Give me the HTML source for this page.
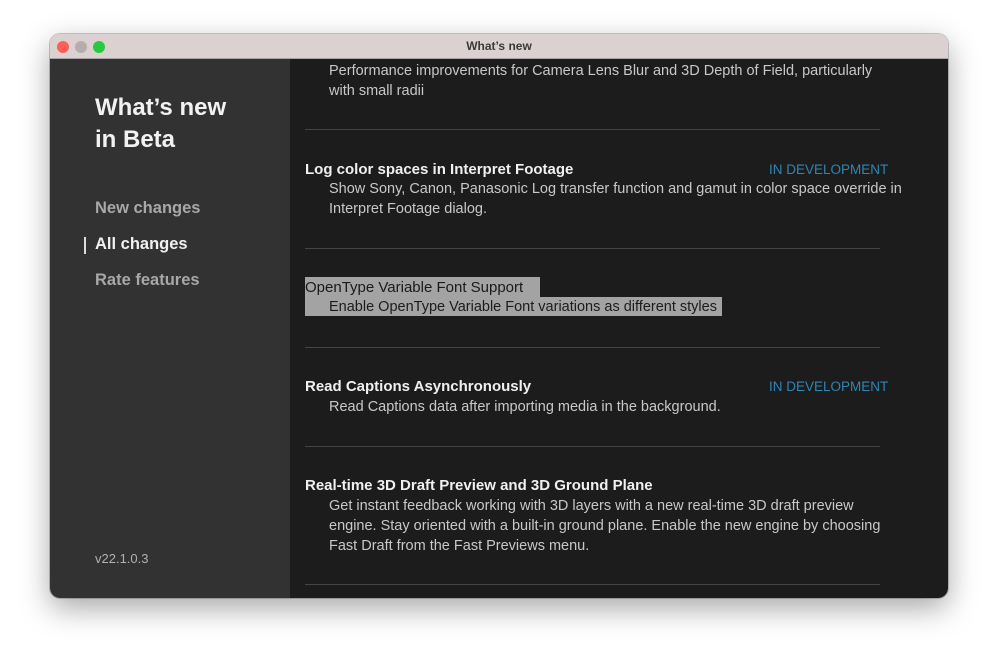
<!DOCTYPE html>
<html><head><meta charset="utf-8"><style>
*{margin:0;padding:0;box-sizing:border-box}
body{width:999px;height:665px;background:#fff;font-family:"Liberation Sans",sans-serif;position:relative;overflow:hidden}
.win{position:absolute;left:50px;top:34px;width:898px;height:564px;border-radius:10px;overflow:hidden;box-shadow:0 10px 30px rgba(0,0,0,.35),0 0 0 1px rgba(0,0,0,.2)}
.tb{position:absolute;left:0;top:0;width:100%;height:25px;background:#dbd1d1;border-bottom:1px solid #a9a2a2;text-align:center;font-size:12px;font-weight:bold;color:#3a3a3a;line-height:25px}
.dot{position:absolute;top:7px;width:12px;height:12px;border-radius:50%}
.side{position:absolute;left:0;top:25px;width:240px;height:539px;background:#323232}
.main{position:absolute;left:240px;top:25px;width:658px;height:539px;background:#1c1c1c}
.a{position:absolute;white-space:nowrap}
.h{font-size:15px;color:#f0f0f0;font-weight:bold}
.d{font-size:14.5px;color:#c8c8c8;line-height:20px}
.dev{font-size:13.5px;color:#2f86b3}
.hr{position:absolute;left:15px;width:575px;height:1px;background:#444}
</style></head><body>
<div class="win">
<div class="tb">What’s new
<div class="dot" style="left:7px;background:#fe5f57"></div>
<div class="dot" style="left:25px;background:#b5adad"></div>
<div class="dot" style="left:43px;background:#28c840"></div></div>
<div class="side">
<div class="a" style="left:45px;top:33px;font-size:24px;font-weight:bold;color:#f2f2f2;line-height:32px">What’s new<br>in Beta</div>
<div class="a" style="left:45px;top:140px;font-size:16.5px;color:#a8a8a8;font-weight:bold">New changes</div>
<div style="position:absolute;left:34px;top:178px;width:2px;height:17px;background:#ddd"></div>
<div class="a" style="left:45px;top:176px;font-size:16.5px;color:#f0f0f0;font-weight:bold">All changes</div>
<div class="a" style="left:45px;top:212px;font-size:16.5px;color:#a8a8a8;font-weight:bold">Rate features</div>
<div class="a" style="left:45px;top:492px;font-size:13px;color:#b0b0b0">v22.1.0.3</div>
</div>
<div class="main">
<div class="a d" style="left:39px;top:2px">Performance improvements for Camera Lens Blur and 3D Depth of Field, particularly<br>with small radii</div>
<div class="hr" style="top:70px"></div>
<div class="a h" style="left:15px;top:102px">Log color spaces in Interpret Footage</div>
<div class="a dev" style="left:479px;top:103px">IN DEVELOPMENT</div>
<div class="a d" style="left:39px;top:120px">Show Sony, Canon, Panasonic Log transfer function and gamut in color space override in<br>Interpret Footage dialog.</div>
<div class="hr" style="top:189px"></div>
<div style="position:absolute;left:15px;top:218px;width:235px;height:20px;background:#a3a3a3"></div>
<div style="position:absolute;left:15px;top:238px;width:417px;height:19px;background:#a3a3a3"></div>
<div class="a h" style="left:15px;top:220px;color:#1a1a1a;font-weight:normal">OpenType Variable Font Support</div>
<div class="a d" style="left:39px;top:238px;color:#1c1c1c">Enable OpenType Variable Font variations as different styles</div>
<div class="hr" style="top:288px"></div>
<div class="a h" style="left:15px;top:319px">Read Captions Asynchronously</div>
<div class="a dev" style="left:479px;top:320px">IN DEVELOPMENT</div>
<div class="a d" style="left:39px;top:338px">Read Captions data after importing media in the background.</div>
<div class="hr" style="top:387px"></div>
<div class="a h" style="left:15px;top:418px">Real-time 3D Draft Preview and 3D Ground Plane</div>
<div class="a d" style="left:39px;top:437px">Get instant feedback working with 3D layers with a new real-time 3D draft preview<br>engine. Stay oriented with a built-in ground plane. Enable the new engine by choosing<br>Fast Draft from the Fast Previews menu.</div>
<div class="hr" style="top:525px"></div>
</div>
</div>
</body></html>
